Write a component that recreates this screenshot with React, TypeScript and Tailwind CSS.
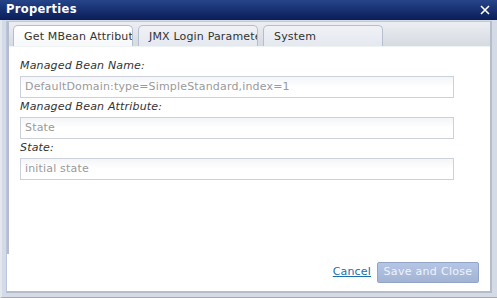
import React from 'react';

const fields = [
  { label: 'Managed Bean Name:', value: 'DefaultDomain:type=SimpleStandard,index=1' },
  { label: 'Managed Bean Attribute:', value: 'State' },
  { label: 'State:', value: 'initial state' },
];

const tabs = ['Get MBean Attribute', 'JMX Login Parameters', 'System'];

export default function App() {
  return (
    <div className="w-[497px] h-[298px] flex flex-col bg-[#d4dbe6] font-['DejaVu_Sans',sans-serif] text-[11px] tracking-[0.17px] text-[#333] overflow-hidden">
      {/* Title bar */}
      <div className="h-[20px] shrink-0 flex items-center justify-between pl-[6px] pr-[7px] bg-gradient-to-b from-[#26458a] to-[#0b1d58]">
        <span className="text-white font-bold text-[11.5px] tracking-[0.3px]">Properties</span>
        <svg width="10" height="10" viewBox="0 0 10 10" className="text-white">
          <path d="M1 1 L9 9 M9 1 L1 9" stroke="currentColor" strokeWidth="1.6" />
        </svg>
      </div>

      {/* Frame */}
      <div className="flex-1 flex flex-col pl-[4px] pr-[5px] pt-[1px] pb-[4px] border-l-2 border-[#e3e8ef] border-b border-b-[#a8a8a8]">
        <div className="flex-1 flex flex-col bg-white border-l border-[#b9c6dc] border-r-2 border-r-[#b6bdca] border-b-2 border-b-[#b6bdca]">
          {/* Tab panel */}
          <div className="flex-1 flex flex-col border-l-2 border-[#b6bdca] border-t border-t-[#c2c9d4]">
            <div className="h-[25px] shrink-0 flex items-end gap-[5px] pl-[4px] bg-gradient-to-b from-[#eceef2] to-[#d6dae1] border-b border-[#eef3f3]">
              {tabs.map((t, i) => (
                <div
                  key={t}
                  className={
                    'w-[120px] h-[21px] shrink-0 overflow-hidden whitespace-nowrap rounded-t-[5px] border border-b-0 pl-[10px] pt-[3px] ' +
                    (i === 0
                      ? 'bg-gradient-to-b from-white to-[#f6f8f9] border-[#b4bfcd] text-[#333]'
                      : 'bg-gradient-to-b from-[#f0f2f6] to-[#e4e8ef] border-[#b4bfcd] text-[#333]')
                  }
                >
                  {t}
                </div>
              ))}
            </div>
            <div className="flex-1 flex flex-col pl-[11px] pt-[10px] pr-[36px]">
              {fields.map((f) => (
                <div key={f.label} className="flex flex-col">
                  <div className="h-[19px] pt-[2px] italic leading-[14px]">{f.label}</div>
                  <div className="h-[22px] border border-[#cdd1db] bg-gradient-to-b from-[#f3f5f7] via-white to-white px-[4px] flex items-center text-[#9a9a9a]">
                    {f.value}
                  </div>
                </div>
              ))}
            </div>
          </div>

          {/* Footer */}
          <div className="h-[37px] shrink-0 flex items-center justify-end gap-[6px] pr-[11px]">
            <a className="text-[#1b6ea8] underline cursor-pointer">Cancel</a>
            <button className="w-[102px] h-[21px] rounded-[2px] border border-[#93a5c6] bg-gradient-to-b from-[#b4c5e6] to-[#a3b3d4] text-[#eef3fb] text-[11px] tracking-[0.3px]">
              Save and Close
            </button>
          </div>
        </div>
      </div>
    </div>
  );
}
